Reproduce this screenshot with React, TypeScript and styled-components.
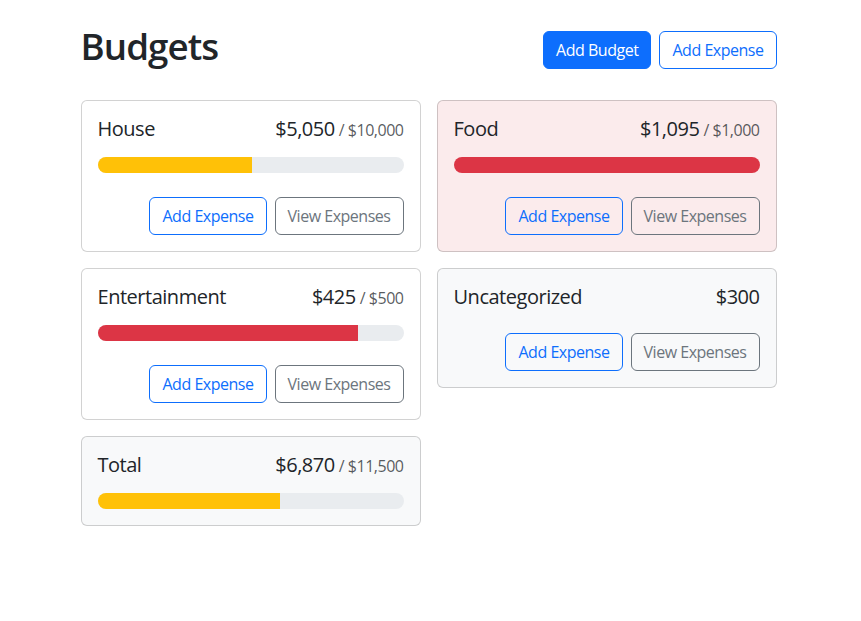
import styled, { createGlobalStyle } from 'styled-components';

const GlobalStyle = createGlobalStyle`
	*, *::before, *::after {
		box-sizing: border-box;
	}
	body {
		margin: 0;
		font-family: 'Open Sans', 'Noto Sans', 'Liberation Sans', sans-serif;
		font-size: 16px;
		line-height: 1.5;
		letter-spacing: -0.03em;
		color: #212529;
		background: #fff;
	}
`;

const Container = styled.div`
	max-width: 720px;
	margin: 24px auto;
	padding: 0 14px 0 10px;
`;

const Header = styled.div`
	display: flex;
	align-items: center;
	gap: 8px;
	margin-bottom: 24px;
`;

const Title = styled.h1`
	margin: 0 auto 8px 0;
	font-size: 36.7px;
	font-weight: 600;
	line-height: 1.2;
	letter-spacing: -0.025em;
`;

type Variant = 'primary' | 'outline-primary' | 'outline-secondary';

const btnColors: Record<Variant, { bg: string; color: string; border: string }> = {
	primary: { bg: '#0d6efd', color: '#fff', border: '#0d6efd' },
	'outline-primary': { bg: 'transparent', color: '#0d6efd', border: '#0d6efd' },
	'outline-secondary': { bg: 'transparent', color: '#6c757d', border: '#6c757d' },
};

const Button = styled.button<{ $variant: Variant; $push?: boolean }>`
	display: inline-block;
	padding: 6px 12px;
	font-family: inherit;
	font-size: 16px;
	font-weight: 400;
	line-height: 1.5;
	letter-spacing: inherit;
	border-radius: 6px;
	cursor: pointer;
	background: ${(p) => btnColors[p.$variant].bg};
	color: ${(p) => btnColors[p.$variant].color};
	border: 1px solid ${(p) => btnColors[p.$variant].border};
	margin-left: ${(p) => (p.$push ? 'auto' : '0')};
`;

const Grid = styled.div`
	display: grid;
	grid-template-columns: repeat(auto-fill, minmax(300px, 1fr));
	gap: 16px;
	align-items: flex-start;
`;

type Tone = 'white' | 'danger' | 'light';

const toneBg: Record<Tone, string> = {
	white: '#fff',
	danger: '#fbebec',
	light: '#f8f9fa',
};

const Card = styled.div<{ $tone: Tone }>`
	background: ${(p) => toneBg[p.$tone]};
	border: 1px solid rgba(0, 0, 0, 0.175);
	border-radius: 6px;
`;

const CardBody = styled.div`
	padding: 16px;
`;

const CardTitle = styled.h5`
	display: flex;
	justify-content: space-between;
	align-items: baseline;
	margin: 0 0 16px;
	font-size: 20px;
	font-weight: 400;
	line-height: 1.2;
`;

const Name = styled.div`
	margin-right: 8px;
`;

const Amount = styled.div`
	display: flex;
	align-items: baseline;
`;

const Max = styled.span`
	margin-left: 4px;
	font-size: 16px;
	color: rgba(33, 37, 41, 0.75);
`;

const Progress = styled.div`
	height: 16px;
	border-radius: 50rem;
	background: #e9ecef;
	overflow: hidden;
	display: flex;
`;

const Bar = styled.div<{ $color: string }>`
	height: 100%;
	background: ${(p) => p.$color};
`;

const Actions = styled.div`
	display: flex;
	gap: 8px;
	margin-top: 24px;
`;

const fmt = (n: number) =>
	new Intl.NumberFormat('en-US', {
		style: 'currency',
		currency: 'USD',
		minimumFractionDigits: 0,
	}).format(n);

const barColor = (amount: number, max: number) => {
	const ratio = amount / max;
	if (ratio < 0.5) return '#0d6efd';
	if (ratio < 0.75) return '#ffc107';
	return '#dc3545';
};

type BudgetProps = {
	name: string;
	amount: number;
	max?: number;
	tone?: Tone;
	hideButtons?: boolean;
};

const BudgetCard = ({ name, amount, max, tone = 'white', hideButtons }: BudgetProps) => (
	<Card $tone={max && amount > max ? 'danger' : tone}>
		<CardBody>
			<CardTitle>
				<Name>{name}</Name>
				<Amount>
					{fmt(amount)}
					{max && <Max>/ {fmt(max)}</Max>}
				</Amount>
			</CardTitle>
			{max && (
				<Progress>
					<Bar
						$color={barColor(amount, max)}
						style={{ width: `${Math.min(100, (amount / max) * 100)}%` }}
					/>
				</Progress>
			)}
			{!hideButtons && (
				<Actions>
					<Button $variant="outline-primary" $push>
						Add Expense
					</Button>
					<Button $variant="outline-secondary">View Expenses</Button>
				</Actions>
			)}
		</CardBody>
	</Card>
);

export default function App() {
	return (
		<>
			<GlobalStyle />
			<Container>
				<Header>
					<Title>Budgets</Title>
					<Button $variant="primary">Add Budget</Button>
					<Button $variant="outline-primary">Add Expense</Button>
				</Header>
				<Grid>
					<BudgetCard name="House" amount={5050} max={10000} />
					<BudgetCard name="Food" amount={1095} max={1000} />
					<BudgetCard name="Entertainment" amount={425} max={500} />
					<BudgetCard name="Uncategorized" amount={300} tone="light" />
					<BudgetCard name="Total" amount={6870} max={11500} tone="light" hideButtons />
				</Grid>
			</Container>
		</>
	);
}
